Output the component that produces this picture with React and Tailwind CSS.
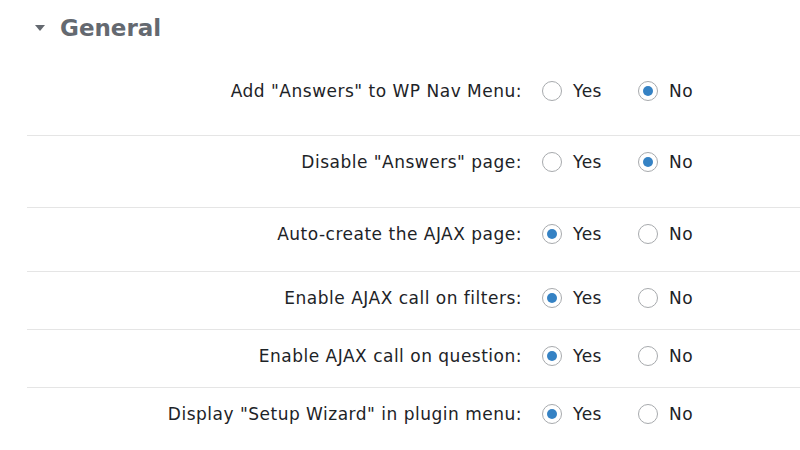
import React from "react";

const rows = [
  { label: 'Add "Answers" to WP Nav Menu:', value: "no", cls: "pt-[16px] pb-[34px]" },
  { label: 'Disable "Answers" page:', value: "no", cls: "pt-[16px] pb-[35px]" },
  { label: "Auto-create the AJAX page:", value: "yes", cls: "pt-[16px] pb-[27px]" },
  { label: "Enable AJAX call on filters:", value: "yes", cls: "pt-[16px] pb-[21px]" },
  { label: "Enable AJAX call on question:", value: "yes", cls: "pt-[16px] pb-[21px]" },
  { label: 'Display "Setup Wizard" in plugin menu:', value: "yes", cls: "pt-[16px] pb-[22px]" },
];

function Radio({ checked }) {
  return (
    <span className="flex h-[20px] w-[20px] shrink-0 items-center justify-center rounded-full border border-[#a7aaad] bg-white">
      {checked && <span className="h-[10px] w-[10px] rounded-full bg-[#3582c4]" />}
    </span>
  );
}

export default function App() {
  return (
    <div
      className="h-[450px] w-[800px] overflow-hidden bg-white text-[#1d2327]"
      style={{ fontFamily: '"DejaVu Sans", Verdana, sans-serif' }}
    >
      <div className="flex items-center pl-[35px] pt-[14px]">
        <span className="h-0 w-0 border-x-[5px] border-t-[6px] border-x-transparent border-t-[#646970]" />
        <h2 className="ml-[15px] text-[23px] font-bold leading-[28px] text-[#646970]">General</h2>
      </div>
      <div className="mt-[23px] ml-[27px]">
        {rows.map((r, i) => (
          <div key={i} className={`flex items-center ${r.cls} ${i > 0 ? "border-t border-[#e5e5e5]" : ""}`}>
            <div className="w-[495px] text-right text-[17px] leading-[20px] tracking-[0.5px]">{r.label}</div>
            <div className="ml-[20px] flex items-center">
              <Radio checked={r.value === "yes"} />
              <span className="ml-[11px] text-[17px] leading-[20px] tracking-[0.5px]">Yes</span>
              <span className="ml-[36px]"><Radio checked={r.value === "no"} /></span>
              <span className="ml-[11px] text-[17px] leading-[20px] tracking-[0.5px]">No</span>
            </div>
          </div>
        ))}
      </div>
    </div>
  );
}
